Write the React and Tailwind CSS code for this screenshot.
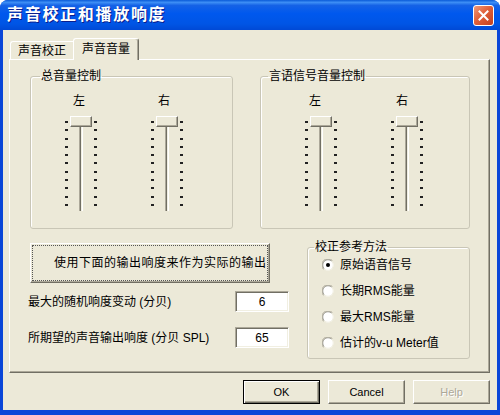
import React from "react";

function Ticks() {
  return (
    <div className="mt-[5px] flex h-[85px] w-[3px] flex-col justify-between">
      {Array.from({ length: 11 }).map((_, i) => (
        <div key={i} className="h-[2px] w-[3px] bg-[#222]" />
      ))}
    </div>
  );
}

function Slider({ label, labelClass }) {
  return (
    <div className="flex flex-col">
      <div className={`h-[14px] leading-[14px] ${labelClass}`}>{label}</div>
      <div className="mt-[8px] flex items-start">
        <Ticks />
        <div className="relative ml-[2px] h-[95px] w-[22px]">
          <div className="ml-[9px] h-[95px] w-[4px] border-l border-r border-l-[#ACA899] border-r-white bg-[linear-gradient(to_right,#716F64_50%,#F1EFE2_50%)]" />
          <div className="absolute left-0 top-0 h-[11px] w-[22px] border border-t-white border-l-white border-r-[#716F64] border-b-[#716F64] bg-[#ECE9D8] shadow-[inset_-1px_-1px_0_#ACA899]" />
        </div>
        <div className="ml-[2px]">
          <Ticks />
        </div>
      </div>
    </div>
  );
}

function Radio({ checked, children }) {
  return (
    <div className="flex h-[22px] items-center">
      <svg width="12" height="12" viewBox="0 0 12 12" className="ml-[14px] shrink-0">
        <circle cx="6" cy="6" r="5.5" fill="#fff" />
        <path d="M1.6 10.4 A5.5 5.5 0 0 1 10.4 1.6" stroke="#ACA899" fill="none" />
        <path d="M2.3 9.7 A4.5 4.5 0 0 1 9.7 2.3" stroke="#716F64" fill="none" strokeOpacity="0.6" />
        <path d="M2.3 9.7 A4.5 4.5 0 0 0 9.7 2.3" stroke="#F1EFE2" fill="none" />
        {checked && <circle cx="6" cy="6" r="2" fill="#000" />}
      </svg>
      <span className="ml-[6px] leading-[14px]">{children}</span>
    </div>
  );
}

function Group({ legend, legendClass, className, children }) {
  return (
    <fieldset
      className={`rounded-[3px] border border-[#C9C6B6] shadow-[inset_1px_1px_0_#fff] ${className}`}
    >
      <legend className={`px-[1px] leading-[14px] ${legendClass}`}>{legend}</legend>
      {children}
    </fieldset>
  );
}

function DlgButton({ children, isDefault, disabled }) {
  const base =
    "flex h-[24px] w-[77px] items-center justify-center bg-[#ECE9D8] text-[11px]";
  const border = isDefault
    ? "border border-black shadow-[inset_1px_1px_0_#fff,inset_-1px_-1px_0_#716F64,inset_-2px_-2px_0_#ACA899]"
    : "border border-t-white border-l-white border-r-[#716F64] border-b-[#716F64] shadow-[inset_-1px_-1px_0_#ACA899]";
  return (
    <div className={`${base} ${border}`}>
      <span
        className={
          disabled
            ? "text-[#ACA899] [text-shadow:1px_1px_0_#fff]"
            : "text-black"
        }
      >
        {children}
      </span>
    </div>
  );
}

function TextBox({ value }) {
  return (
    <div className="flex h-[21px] w-[54px] items-center justify-center border border-t-[#ACA899] border-l-[#ACA899] border-r-white border-b-white bg-white shadow-[inset_1px_1px_0_#716F64,inset_-1px_-1px_0_#F1EFE2]">
      <span className="leading-[14px]">{value}</span>
    </div>
  );
}

export default function App() {
  return (
    <div className="font-['Liberation_Sans','Noto_Sans_CJK_SC',sans-serif] text-[12px] leading-[14px] text-black">
      <div className="flex h-[415px] w-[500px] flex-col overflow-hidden rounded-t-[8px] bg-[#0A46D8]">
        {/* Title bar */}
        <div className="flex h-[30px] shrink-0 items-center justify-between bg-[linear-gradient(to_bottom,#0A5BD8_0%,#3D8EF5_8%,#1562E6_18%,#0058EE_45%,#0055E5_80%,#0049D6_100%)] pl-[7px] pr-[6px]">
          <span className="text-[16px] font-bold leading-[20px] tracking-[1.7px] text-white [text-shadow:1px_1px_0_#0A1E8C]">
            声音校正和播放响度
          </span>
          <div className="flex h-[21px] w-[21px] items-center justify-center rounded-[3px] border border-white bg-[linear-gradient(135deg,#F09A7A_0%,#E0603A_45%,#C4401E_100%)]">
            <svg width="11" height="11" viewBox="0 0 11 11">
              <path d="M1.5 1.5 L9.5 9.5 M9.5 1.5 L1.5 9.5" stroke="#fff" strokeWidth="2" strokeLinecap="square" />
            </svg>
          </div>
        </div>

        {/* Body */}
        <div className="mx-[3px] mb-[5px] flex flex-1 flex-col bg-[#ECE9D8]">
          {/* Tabs */}
          <div className="ml-[7px] mt-[8px] flex items-end">
            <div className="flex h-[18px] w-[63px] justify-center rounded-tl-[3px] border-l border-t border-l-white border-t-white pt-[2px]">
              声音校正
            </div>
            <div className="relative z-10 -mb-px flex h-[22px] w-[66px] justify-center rounded-t-[3px] border-l border-r border-t border-l-white border-t-white border-r-[#716F64] bg-[#ECE9D8] pt-[3px] shadow-[inset_-1px_0_0_#ACA899]">
              声音音量
            </div>
          </div>

          {/* Panel */}
          <div className="ml-[6px] flex h-[314px] w-[481px] flex-col border border-t-white border-l-white border-r-[#716F64] border-b-[#716F64] shadow-[inset_-1px_-1px_0_#ACA899]">
            <div className="mt-[9px] flex">
              <Group legend="总音量控制" legendClass="ml-[9px]" className="ml-[20px] h-[160px] w-[203px]">
                <div className="ml-[34px] flex gap-[54px] pt-[11px]">
                  <Slider label="左" labelClass="ml-[8px]" />
                  <Slider label="右" labelClass="ml-[7px]" />
                </div>
              </Group>
              <Group legend="言语信号音量控制" legendClass="ml-[7px]" className="ml-[27px] h-[160px] w-[210px]">
                <div className="ml-[44px] flex gap-[54px] pt-[11px]">
                  <Slider label="左" labelClass="ml-[4px]" />
                  <Slider label="右" labelClass="ml-[5px]" />
                </div>
              </Group>
            </div>

            <div className="mt-[11px] flex items-start">
              <div className="ml-[18px] flex w-[261px] flex-col pt-[3px]">
                <div className="ml-[2px] flex h-[40px] w-[240px] border border-t-white border-l-white border-r-[#716F64] border-b-[#716F64] bg-[#ECE9D8] p-[1px] shadow-[inset_-1px_-1px_0_#ACA899]">
                  <div className="flex flex-1 items-center border border-dotted border-[#555] pl-[21px] tracking-[0.5px]">
                    使用下面的输出响度来作为实际的输出
                  </div>
                </div>
                <div className="mt-[8px] flex h-[21px] items-center justify-between">
                  <span>最大的随机响度变动 (分贝)</span>
                  <TextBox value="6" />
                </div>
                <div className="mt-[15px] flex h-[21px] items-center justify-between">
                  <span>所期望的声音输出响度 (分贝 SPL)</span>
                  <TextBox value="65" />
                </div>
              </div>

              <Group legend="校正参考方法" legendClass="ml-[6px]" className="ml-[18px] h-[119px] w-[163px]">
                <div className="flex flex-col gap-[4px]">
                  <Radio checked>原始语音信号</Radio>
                  <Radio>长期RMS能量</Radio>
                  <Radio>最大RMS能量</Radio>
                  <Radio>估计的v-u Meter值</Radio>
                </div>
              </Group>
            </div>
          </div>

          {/* Dialog buttons */}
          <div className="mr-[7px] mt-[7px] flex justify-end gap-[8px]">
            <DlgButton isDefault>OK</DlgButton>
            <DlgButton>Cancel</DlgButton>
            <DlgButton disabled>Help</DlgButton>
          </div>
        </div>
      </div>
    </div>
  );
}
